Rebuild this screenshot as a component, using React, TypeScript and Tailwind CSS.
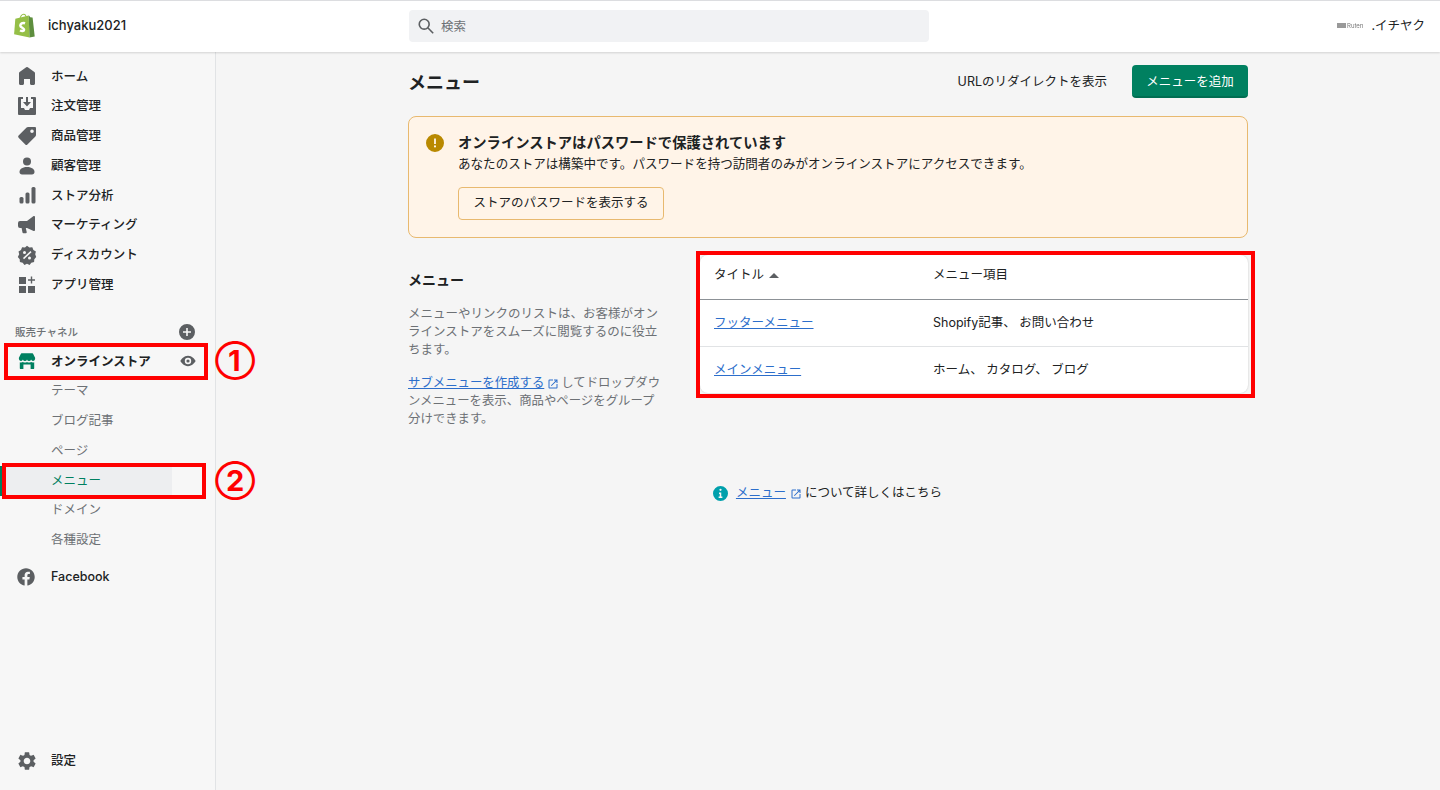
import React from "react";
import { FaFacebook } from "react-icons/fa";
import { MdSettings, MdOpenInNew } from "react-icons/md";

const font = "font-['Inter','Noto_Sans_CJK_JP',sans-serif]";

function Icon({ children, className = "h-5 w-5 text-[#5c5f62]" }: { children: React.ReactNode; className?: string }) {
  return (
    <svg viewBox="0 0 20 20" fill="currentColor" className={className}>
      {children}
    </svg>
  );
}

const HomeIcon = () => (
  <Icon>
    <path d="M18 7.261V17.5c0 .841-.672 1.5-1.5 1.5h-2c-.828 0-1.5-.659-1.5-1.5V13H7v4.477C7 18.318 6.328 19 5.5 19h-2c-.828 0-1.5-.682-1.5-1.523V7.261a1.5 1.5 0 0 1 .615-1.205l6.59-4.82a1.481 1.481 0 0 1 1.59 0l6.59 4.82A1.5 1.5 0 0 1 18 7.26z" />
  </Icon>
);
const OrdersIcon = () => (
  <Icon>
    <path
      fillRule="evenodd"
      d="M2 1h4v2H4v9h3l1 2h4l1-2h3V3h-2V1h4a1 1 0 0 1 1 1v16a1 1 0 0 1-1 1H2a1 1 0 0 1-1-1V2a1 1 0 0 1 1-1z"
    />
    <path d="M9 1h2v5h3l-4 4.5L6 6h3z" />
  </Icon>
);
const TagIcon = () => (
  <Icon>
    <path
      fillRule="evenodd"
      d="M11 1h7a1 1 0 0 1 1 1v7a2 2 0 0 1-.6 1.4l-8 8a1.5 1.5 0 0 1-2.1 0l-6.7-6.7a1.5 1.5 0 0 1 0-2.1l8-8A2 2 0 0 1 11 1zm4 6a1.8 1.8 0 1 0 0-3.6A1.8 1.8 0 0 0 15 7z"
    />
  </Icon>
);
const CustomersIcon = () => (
  <Icon>
    <circle cx="10" cy="5.5" r="4" />
    <path d="M10 11c5 0 7.5 2.400 7.500 5 0 1.500-1 2.500-2.500 2.500H5c-1.500 0-2.500-1-2.500-2.500 0-2.600 2.500-5 7.500-5z" />
  </Icon>
);
const AnalyticsIcon = () => (
  <Icon>
    <rect x="2.500" y="12" width="4" height="6.500" rx="1.500" />
    <rect x="8.500" y="7.500" width="4" height="11" rx="1.500" />
    <rect x="14.500" y="2" width="4" height="16.500" rx="1.500" />
  </Icon>
);
const MarketingIcon = () => (
  <Icon>
    <path d="M18 2v13a1 1 0 0 1-1.400.9L10 13H8.800l.9 4a1 1 0 0 1-1 1.200H6.500a1 1 0 0 1-1-.8L4.600 13H3a2 2 0 0 1-2-2V8a2 2 0 0 1 2-2h7l6.600-4.900A1 1 0 0 1 18 2z" />
  </Icon>
);
const DiscountIcon = () => (
  <Icon>
    <path
      fillRule="evenodd"
      d="M10 .8l2.400 1.600 2.900-.2 1.100 2.700 2.500 1.500-.7 2.800L19.200 12l-1.900 2.200-.2 2.900-2.800.7L12.600 20 10 18.800 7.400 20l-1.700-2.200-2.800-.7-.2-2.900L.8 12l1.400-2.800-.7-2.800L4 4.900l1.100-2.700 2.900.2L10 .8zM7.500 9a1.500 1.500 0 1 0 0-3 1.500 1.500 0 0 0 0 3zm5 5.500a1.500 1.500 0 1 0 0-3 1.500 1.500 0 0 0 0 3zM13.500 6L6 13l1 1.200L14.500 7.200 13.500 6z"
    />
  </Icon>
);
const AppsIcon = () => (
  <Icon>
    <rect x="2" y="2" width="7" height="7" />
    <rect x="2" y="11" width="7" height="7" />
    <rect x="11" y="11" width="7" height="7" />
    <path d="M13.800 1.500h1.400v2.800H18v1.400h-2.800v2.800h-1.400V5.700H11V4.300h2.800z" />
  </Icon>
);
const StoreIcon = () => (
  <Icon className="ml-[1px] h-[18px] w-[18px] text-[#008060]">
    <path d="M4 1.500h12a1 1 0 0 1 .9.600L19 6.500v1.300a2.300 2.300 0 0 1-4.500.5 2.300 2.300 0 0 1-4.500 0 2.300 2.300 0 0 1-4.500 0A2.300 2.300 0 0 1 1 7.800V6.500l2.100-4.400A1 1 0 0 1 4 1.500z" />
    <path d="M2 11.300c1.100.400 2.500.300 3.500-.3 1.400.8 3.100.8 4.500 0 1.400.8 3.100.8 4.500 0 1 .6 2.400.7 3.500.3V18a1 1 0 0 1-1 1h-3v-5H6v5H3a1 1 0 0 1-1-1v-6.700z" />
  </Icon>
);

function NavItem({ icon, label, bold = false }: { icon: React.ReactNode; label: string; bold?: boolean }) {
  return (
    <div className="flex h-[29.75px] items-center pl-[17px]">
      <span className="flex w-[34px] shrink-0">{icon}</span>
      <span className={`pt-[1px] text-[12.500px] text-[#202223] ${bold ? "font-semibold" : "font-medium"}`}>{label}</span>
    </div>
  );
}

function SubItem({ label, active = false }: { label: string; active?: boolean }) {
  return (
    <div className="flex h-[29.8px] items-center">
      {active ? (
        <div className="flex h-[30px] w-[172px] items-center border-l-[3px] border-[#008060] pl-[3px]">
          <div className="flex h-full w-full items-center bg-[#edeef0] pt-[1px] pl-[45px] text-[12.500px] text-[#008060]">{label}</div>
        </div>
      ) : (
        <span className="pt-[1px] pl-[51px] text-[12.500px] text-[#6d7175]">{label}</span>
      )}
    </div>
  );
}

export default function App() {
  return (
    <div className={`relative flex h-[790px] w-[1440px] flex-col overflow-hidden bg-[#f5f5f5] ${font}`}>
      <header className="z-10 flex h-[52px] shrink-0 items-center border-t border-[#dcdde0] bg-white pb-[2px] shadow-[0_1px_2px_rgba(0,0,0,0.15)]">
        <div className="flex w-[409px] shrink-0 items-center pl-[14px]">
          <svg viewBox="0 0 20 24" className="h-[25px] w-[21px]">
            <path d="M14 2.300 1.200 5.500 0 20.500 14.800 23.500z" fill="#95BF47" />
            <path d="M14 2.300c.200 0 .400.100.500.300l1 1.400 2 .300c.200 0 .3.200.3.300l2 17.900-5 1z" fill="#5E8E3E" />
            <path d="M5.500 6.300C6 3.500 7.500 1.300 9.200 1.200c1.500-.100 2.400 1.500 2.400 3.400" fill="none" stroke="#95BF47" strokeWidth="1" />
            <path d="M10.500 9.800c-2.500-.900-4.600.400-4.500 2.300.100 2 3.600 2.100 3.600 4 0 1.500-2.200 1.600-3.800.5" fill="none" stroke="#fff" strokeWidth="2.400" />
          </svg>
          <span className="ml-[13px] text-[13px] font-medium text-[#202223]">ichyaku2021</span>
        </div>
        <div className="flex h-8 w-[520px] items-center rounded-[4px] bg-[#f1f2f4] pl-2">
          <svg viewBox="0 0 20 20" className="h-[18px] w-[18px] text-[#5c5f62]" fill="none" stroke="currentColor" strokeWidth="1.800">
            <circle cx="8" cy="8" r="5.500" />
            <path d="M12 12l6 6" />
          </svg>
          <span className="ml-[6px] pt-[3px] text-[12.500px] text-[#6d7175]">検索</span>
        </div>
        <div className="ml-auto flex items-center pr-[15px]">
          <span className="flex items-center gap-[1px] text-[6px] leading-none text-[#777] blur-[0.4px]">
            <span className="h-[5px] w-[9px] bg-[#999]" />
            Ruten
          </span>
          <span className="ml-[8px] pt-[2px] text-[12.500px] text-[#202223]">.イチヤク</span>
        </div>
      </header>

      <div className="flex min-h-0 flex-1">
        <aside className="flex w-[216px] shrink-0 flex-col border-r border-[#e1e3e5] bg-[#f7f7f7] pt-[9.500px] pb-[14px]">
          <NavItem icon={<HomeIcon />} label="ホーム" />
          <NavItem icon={<OrdersIcon />} label="注文管理" />
          <NavItem icon={<TagIcon />} label="商品管理" />
          <NavItem icon={<CustomersIcon />} label="顧客管理" />
          <NavItem icon={<AnalyticsIcon />} label="ストア分析" />
          <NavItem icon={<MarketingIcon />} label="マーケティング" />
          <NavItem icon={<DiscountIcon />} label="ディスカウント" />
          <NavItem icon={<AppsIcon />} label="アプリ管理" />

          <div className="mt-[21px] flex h-[24px] items-center justify-between pr-[20px] pl-[15px]">
            <span className="text-[10.500px] font-medium text-[#6d7175]">販売チャネル</span>
            <svg viewBox="0 0 20 20" className="mb-[2px] h-4 w-4 text-[#5c5f62]" fill="currentColor">
              <path d="M10 0a10 10 0 1 0 0 20 10 10 0 0 0 0-20zm1 5v4h4v2h-4v4H9v-4H5V9h4V5z" fillRule="evenodd" />
            </svg>
          </div>

          <div className="mt-[2px] flex h-[29.75px] items-center pr-[19px] pl-[17px]">
            <span className="flex w-[34px] shrink-0">
              <StoreIcon />
            </span>
            <span className="pt-[1px] text-[12.500px] font-semibold text-[#202223]">オンラインストア</span>
            <svg viewBox="0 0 20 20" className="ml-auto h-4 w-4 text-[#5c5f62]" fill="currentColor">
              <path
                fillRule="evenodd"
                d="M10 3.500c5 0 8.500 4.500 9.500 6.500-1 2-4.500 6.500-9.500 6.500S1.500 12 .5 10c1-2 4.500-6.500 9.500-6.500zm0 10.500a4 4 0 1 0 0-8 4 4 0 0 0 0 8zm0-2a2 2 0 1 1 0-4 2 2 0 0 1 0 4z"
              />
            </svg>
          </div>
          <SubItem label="テーマ" />
          <SubItem label="ブログ記事" />
          <SubItem label="ページ" />
          <SubItem label="メニュー" active />
          <SubItem label="ドメイン" />
          <SubItem label="各種設定" />

          <div className="mt-[7px]">
            <NavItem icon={<FaFacebook className="h-[18px] w-[18px] text-[#5c5f62]" />} label="Facebook" />
          </div>
          <div className="mt-auto">
            <NavItem icon={<MdSettings className="-ml-[1px] h-[22px] w-[22px] text-[#5c5f62]" />} label="設定" />
          </div>
        </aside>

        <main className="min-w-0 flex-1">
          <div className="mx-auto w-[840px] pt-[13px]">
            <div className="flex h-[33px] items-center">
              <h1 className="pt-[2px] text-[18px] font-semibold text-[#202223]">メニュー</h1>
              <span className="ml-auto pt-[2px] text-[12.500px] text-[#202223]">URLのリダイレクトを表示</span>
              <button className="ml-[25px] h-[33px] w-[116px] rounded-[4px] border-b-2 border-[#006e52] bg-[#008060] pt-[3px] text-[12.500px] text-white">
                メニューを追加
              </button>
            </div>

            <section className="mt-[18px] flex h-[122px] rounded-[8px] border border-[#e8b96f] bg-[#fff4e8] pt-[17px] pl-[17px]">
              <svg viewBox="0 0 20 20" className="h-[18px] w-[18px] shrink-0 text-[#b98900]" fill="currentColor">
                <path
                  fillRule="evenodd"
                  d="M10 0a10 10 0 1 0 0 20 10 10 0 0 0 0-20zm-1 5h2v6H9V5zm1 10a1.200 1.200 0 1 1 0-2.400 1.200 1.200 0 0 1 0 2.400z"
                />
              </svg>
              <div className="ml-[14px]">
                <h2 className="text-[14.300px] leading-[18px] font-semibold text-[#202223]">オンラインストアはパスワードで保護されています</h2>
                <p className="mt-[2px] text-[12.550px] leading-[20px] text-[#202223]">
                  あなたのストアは構築中です。パスワードを持つ訪問者のみがオンラインストアにアクセスできます。
                </p>
                <button className="mt-[13px] h-[33px] w-[206px] rounded-[4px] border border-[#e8b96f] text-[12.500px] text-[#202223]">
                  ストアのパスワードを表示する
                </button>
              </div>
            </section>

            <section className="mt-[17px] grid grid-cols-[292px_548px] items-start">
              <div className="pt-[15px]">
                <h3 className="text-[14px] leading-[20px] font-semibold text-[#202223]">メニュー</h3>
                <p className="mt-[15px] w-[258px] text-[12.500px] leading-[17.800px] text-[#6d7175]">
                  メニューやリンクのリストは、お客様がオンラインストアをスムーズに閲覧するのに役立ちます。
                </p>
                <p className="mt-[16px] w-[258px] text-[12.400px] leading-[18px] text-[#6d7175]">
                  <span className="text-[#2c6ecb] underline">サブメニューを作成する</span>
                  <MdOpenInNew className="mr-[2px] ml-[3px] inline h-[12px] w-[12px] text-[#2c6ecb]" />
                  してドロップダウンメニューを表示、商品やページをグループ分けできます。
                </p>
              </div>
              <div className="rounded-[8px] bg-white text-[12.500px] text-[#202223] shadow-[0_0_2px_rgba(0,0,0,0.2)]">
                <div className="grid h-[45px] grid-cols-[219px_1fr] items-center border-b border-[#8c9196] pb-[3px] pl-[14px]">
                  <span className="flex items-center gap-[5px]">
                    タイトル
                    <span className="h-0 w-0 border-x-[5px] border-b-[5px] border-x-transparent border-b-[#5c5f62]" />
                  </span>
                  <span>メニュー項目</span>
                </div>
                <div className="grid h-[47px] grid-cols-[219px_1fr] items-center border-b border-[#e1e3e5] pl-[14px]">
                  <span className="text-[#2c6ecb] underline">フッターメニュー</span>
                  <span>Shopify記事、 お問い合わせ</span>
                </div>
                <div className="grid h-[46px] grid-cols-[219px_1fr] items-center pl-[14px]">
                  <span className="text-[#2c6ecb] underline">メインメニュー</span>
                  <span>ホーム、 カタログ、 ブログ</span>
                </div>
              </div>
            </section>

            <div className="mt-[56px] flex items-center justify-center pr-[1px] text-[12.500px] text-[#202223]">
              <svg viewBox="0 0 20 20" className="h-[15px] w-[15px] text-[#00a0ac]" fill="currentColor">
                <path
                  fillRule="evenodd"
                  d="M10 0a10 10 0 1 0 0 20 10 10 0 0 0 0-20zm0 3.500a1.500 1.500 0 1 1 0 3 1.500 1.500 0 0 1 0-3zM8 8.500h3V14h1.500v2h-5v-2H9v-3.500H8v-2z"
                />
              </svg>
              <span className="ml-[8px] text-[#2c6ecb] underline">メニュー</span>
              <MdOpenInNew className="mr-[3px] ml-[4px] h-[12px] w-[12px] text-[#2c6ecb]" />
              <span>について詳しくはこちら</span>
            </div>
          </div>
        </main>
      </div>

      {/* red annotation marks sit on top of the screenshot */}
      <div className="absolute top-[343px] left-[4px] h-[37px] w-[204px] border-4 border-[#ff0000]" />
      <div className="absolute top-[463px] left-[2px] h-[36px] w-[204px] border-4 border-[#ff0000]" />
      <div className="absolute top-[251px] left-[696px] h-[147px] w-[559px] border-4 border-[#ff0000]" />
      <span className="absolute top-[339px] left-[215px] text-[29px] leading-[44px] font-bold text-[#ff0000]">①</span>
      <span className="absolute top-[459px] left-[215px] text-[29px] leading-[44px] font-bold text-[#ff0000]">②</span>
    </div>
  );
}
